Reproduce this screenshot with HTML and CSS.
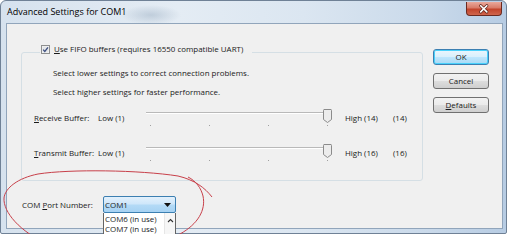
FILE: index.html
```html
<!DOCTYPE html>
<html>
<head>
<meta charset="utf-8">
<title>Advanced Settings for COM1</title>
<link rel="stylesheet" href="styles.css">
</head>
<body>
<div class="window">
  <div class="titlebar">
    <span class="title">Advanced Settings for COM1</span>
    <div class="close">
      <svg width="36" height="14" viewBox="0 0 36 14">
        <path d="M14.5 3.5 L21 10 M21 3.5 L14.5 10" stroke="#5b2218" stroke-width="3.2" stroke-linecap="round" fill="none"/>
        <path d="M14.5 3.5 L21 10 M21 3.5 L14.5 10" stroke="#ffffff" stroke-width="1.7" stroke-linecap="round" fill="none"/>
      </svg>
    </div>
  </div>
  <div class="client">
    <div class="main">
      <div class="group">
        <div class="legend">
          <svg class="check" width="9" height="9" viewBox="0 0 9 9">
            <rect x="0.5" y="0.5" width="8" height="8" fill="#f6f6f6" stroke="#8e8f8f"/>
            <rect x="1.5" y="1.5" width="6" height="6" fill="#e4e6e8"/>
            <path d="M2.1 4.6 L3.8 6.4 L7 2.3" stroke="#3d4f80" stroke-width="1.3" fill="none"/>
          </svg>
          <span><u>U</u>se FIFO buffers (requires 16550 compatible UART)</span>
        </div>
        <p class="hint first">Select lower settings to correct connection problems.</p>
        <p class="hint">Select higher settings for faster performance.</p>
        <div class="slider-row">
          <span class="lbl"><u>R</u>eceive Buffer:</span>
          <span class="low">Low (1)</span>
          <svg class="slider" width="186" height="18" viewBox="0 0 186 18">
            <rect x="0" y="3" width="185" height="1" fill="#b9b9b9"/>
            <rect x="0" y="4" width="185" height="1" fill="#ffffff"/>
            <rect x="4" y="16" width="1" height="1" fill="#a0a0a0"/>
            <rect x="63" y="16" width="1" height="1" fill="#a0a0a0"/>
            <rect x="122" y="16" width="1" height="1" fill="#a0a0a0"/>
            <rect x="181" y="16" width="1" height="1" fill="#a0a0a0"/>
            <path d="M178 0.5 H185 Q185.5 0.5 185.5 1.5 V10.5 L181.5 13.5 L177.5 10.5 V1.5 Q177.5 0.5 178 0.5 Z" fill="#ececec" stroke="#8b8b8b"/>
          </svg>
          <span class="high">High (14)</span>
          <span class="val">(14)</span>
        </div>
        <div class="slider-row second">
          <span class="lbl"><u>T</u>ransmit Buffer:</span>
          <span class="low">Low (1)</span>
          <svg class="slider" width="186" height="18" viewBox="0 0 186 18">
            <rect x="0" y="3" width="185" height="1" fill="#b9b9b9"/>
            <rect x="0" y="4" width="185" height="1" fill="#ffffff"/>
            <rect x="4" y="16" width="1" height="1" fill="#a0a0a0"/>
            <rect x="63" y="16" width="1" height="1" fill="#a0a0a0"/>
            <rect x="122" y="16" width="1" height="1" fill="#a0a0a0"/>
            <rect x="181" y="16" width="1" height="1" fill="#a0a0a0"/>
            <path d="M178 0.5 H185 Q185.5 0.5 185.5 1.5 V10.5 L181.5 13.5 L177.5 10.5 V1.5 Q177.5 0.5 178 0.5 Z" fill="#ececec" stroke="#8b8b8b"/>
          </svg>
          <span class="high">High (16)</span>
          <span class="val">(16)</span>
        </div>
      </div>
      <div class="port-row">
        <span class="port-lbl">COM <u>P</u>ort Number:</span>
        <div class="combo">
          <span class="combo-text">COM1</span>
          <svg class="combo-arrow" width="7" height="4" viewBox="0 0 7 4"><path d="M0 0 H7 L3.5 4 Z" fill="#111"/></svg>
          <div class="droplist">
            <div class="items">
              <div class="item">COM6 (in use)</div>
              <div class="item">COM7 (in use)</div>
            </div>
            <div class="scroll">
              <svg width="7" height="5" viewBox="0 0 7 5"><path d="M1 4 L3.5 1.5 L6 4" stroke="#333" stroke-width="1.1" fill="none"/></svg>
            </div>
          </div>
        </div>
      </div>
    </div>
    <div class="buttons">
      <div class="btn default">OK</div>
      <div class="btn">Cancel</div>
      <div class="btn"><u>D</u>efaults</div>
    </div>
  </div>
  <svg class="annotation" width="514" height="241" viewBox="0 0 514 241">
    <path d="M212 197 C205 188 195 180 178 176 C140 170 70 169 38 174 C18 178 5 188 4 198 C3 212 20 232 48 244 C70 252 85 234 125 241 C150 246 165 242 180 234 C198 224 206 210 203 196 C201 188 196 181 188 177" stroke="#c8404a" stroke-width="1" fill="none"/>
  </svg>
</div>
</body>
</html>
```
FILE: styles.css
```css
* { box-sizing: border-box; }

body {
  margin: 0;
  background: #ffffff;
  font-family: "Open Sans", "Noto Sans", sans-serif;
  font-size: 7.95px;
  color: #1a1a1a;
}

p { margin: 0; }

.window {
  position: relative;
  width: 507px;
  height: 234px;
  border: 1px solid #6f8196;
  border-radius: 6px 6px 2px 2px;
  background:
    radial-gradient(ellipse 30px 10px at 150px 14px, rgba(150,170,190,0.45), rgba(150,170,190,0) 100%),
    linear-gradient(90deg, #d6e2ee 0%, #e4ecf4 35%, #dbe6f1 60%, #c9d9ea 85%, #b7cce3 100%);
  display: flex;
  flex-direction: column;
}

.titlebar {
  height: 22px;
  flex: none;
  display: flex;
  align-items: flex-start;
  justify-content: space-between;
  padding: 0 4px 0 6px;
}

.title {
  margin-top: 4px;
  font-size: 9px;
  line-height: 14px;
  color: #000;
}

.close {
  margin-top: 1px;
  width: 36px;
  height: 14px;
  border: 1px solid #6b2a20;
  border-top: none;
  border-radius: 0 0 4px 4px;
  background: linear-gradient(#e9a99b 0%, #d87b68 45%, #c2442b 55%, #d0664d 100%);
  display: flex;
}

.client {
  margin: 0 3px 0 5px;
  height: 206px;
  flex: none;
  border: 1px solid #91a5bb;
  background: #f0f0f0;
  display: flex;
  align-items: flex-start;
}

.main {
  flex: none;
  width: 416px;
  padding: 28px 0 0 14px;
}

.group {
  width: 402px;
  height: 129px;
  border: 1px solid #d5dfe5;
  border-radius: 3px;
}

.legend {
  display: flex;
  align-items: center;
  gap: 4px;
  width: max-content;
  height: 12px;
  line-height: 12px;
  margin: -10px 0 0 18px;
  padding: 0 9px 0 1px;
  background: #f0f0f0;
}

.check { flex: none; display: block; }

.hint {
  margin: 7px 0 0 31px;
  line-height: 12px;
}
.hint.first { margin-top: 12px; }

.slider-row {
  display: flex;
  align-items: center;
  height: 18px;
  margin: 11px 0 0 12px;
}
.slider-row.second { margin-top: 17px; }

.lbl { width: 64px; flex: none; }
.low { width: 48px; flex: none; }
.slider { flex: none; display: block; }
.high { width: 48px; flex: none; margin-left: 13px; }
.val { flex: none; }

.port-row {
  display: flex;
  align-items: center;
  height: 17px;
  margin: 15px 0 0 1px;
}

.port-lbl { width: 81px; flex: none; }

.combo {
  position: relative;
  width: 73px;
  height: 17px;
  border: 1px solid #3c7fb1;
  border-radius: 2px;
  background: linear-gradient(#e3f1fc 0%, #cfe7fa 45%, #b3daf6 55%, #a6d2f3 100%);
  display: flex;
  align-items: center;
  justify-content: space-between;
  padding: 0 4px 0 1px;
}

.combo-arrow { display: block; }

.droplist {
  position: absolute;
  top: 16px;
  left: -1px;
  width: 73px;
  height: 22px;
  border: 1px solid #646464;
  border-top: none;
  background: #ffffff;
  display: flex;
}

.items {
  flex: 1;
  padding: 1px 0 0 1px;
}

.item {
  line-height: 10px;
  white-space: nowrap;
}

.scroll {
  width: 11px;
  flex: none;
  background: #f6f6f6;
  border-left: 1px solid #e6e6e6;
  display: flex;
  justify-content: center;
  padding-top: 5px;
}
.scroll svg { display: block; }

.buttons {
  flex: none;
  display: flex;
  flex-direction: column;
  gap: 8px;
  margin: 25px 0 0 10px;
}

.btn {
  width: 56px;
  height: 16px;
  border: 1px solid #707070;
  border-radius: 3px;
  background: linear-gradient(#f2f2f2 0%, #ebebeb 48%, #dddddd 52%, #cfcfcf 100%);
  display: flex;
  align-items: center;
  justify-content: center;
  line-height: 12px;
}

.btn.default {
  border-color: #3c7fb1;
  box-shadow: inset 0 0 0 1px #48d1fb;
  background: linear-gradient(#eaf6fd 0%, #d9f0fc 48%, #bee6fd 52%, #a7d9f5 100%);
}

.annotation {
  position: absolute;
  left: -1px;
  top: -1px;
  pointer-events: none;
  overflow: visible;
}
```
